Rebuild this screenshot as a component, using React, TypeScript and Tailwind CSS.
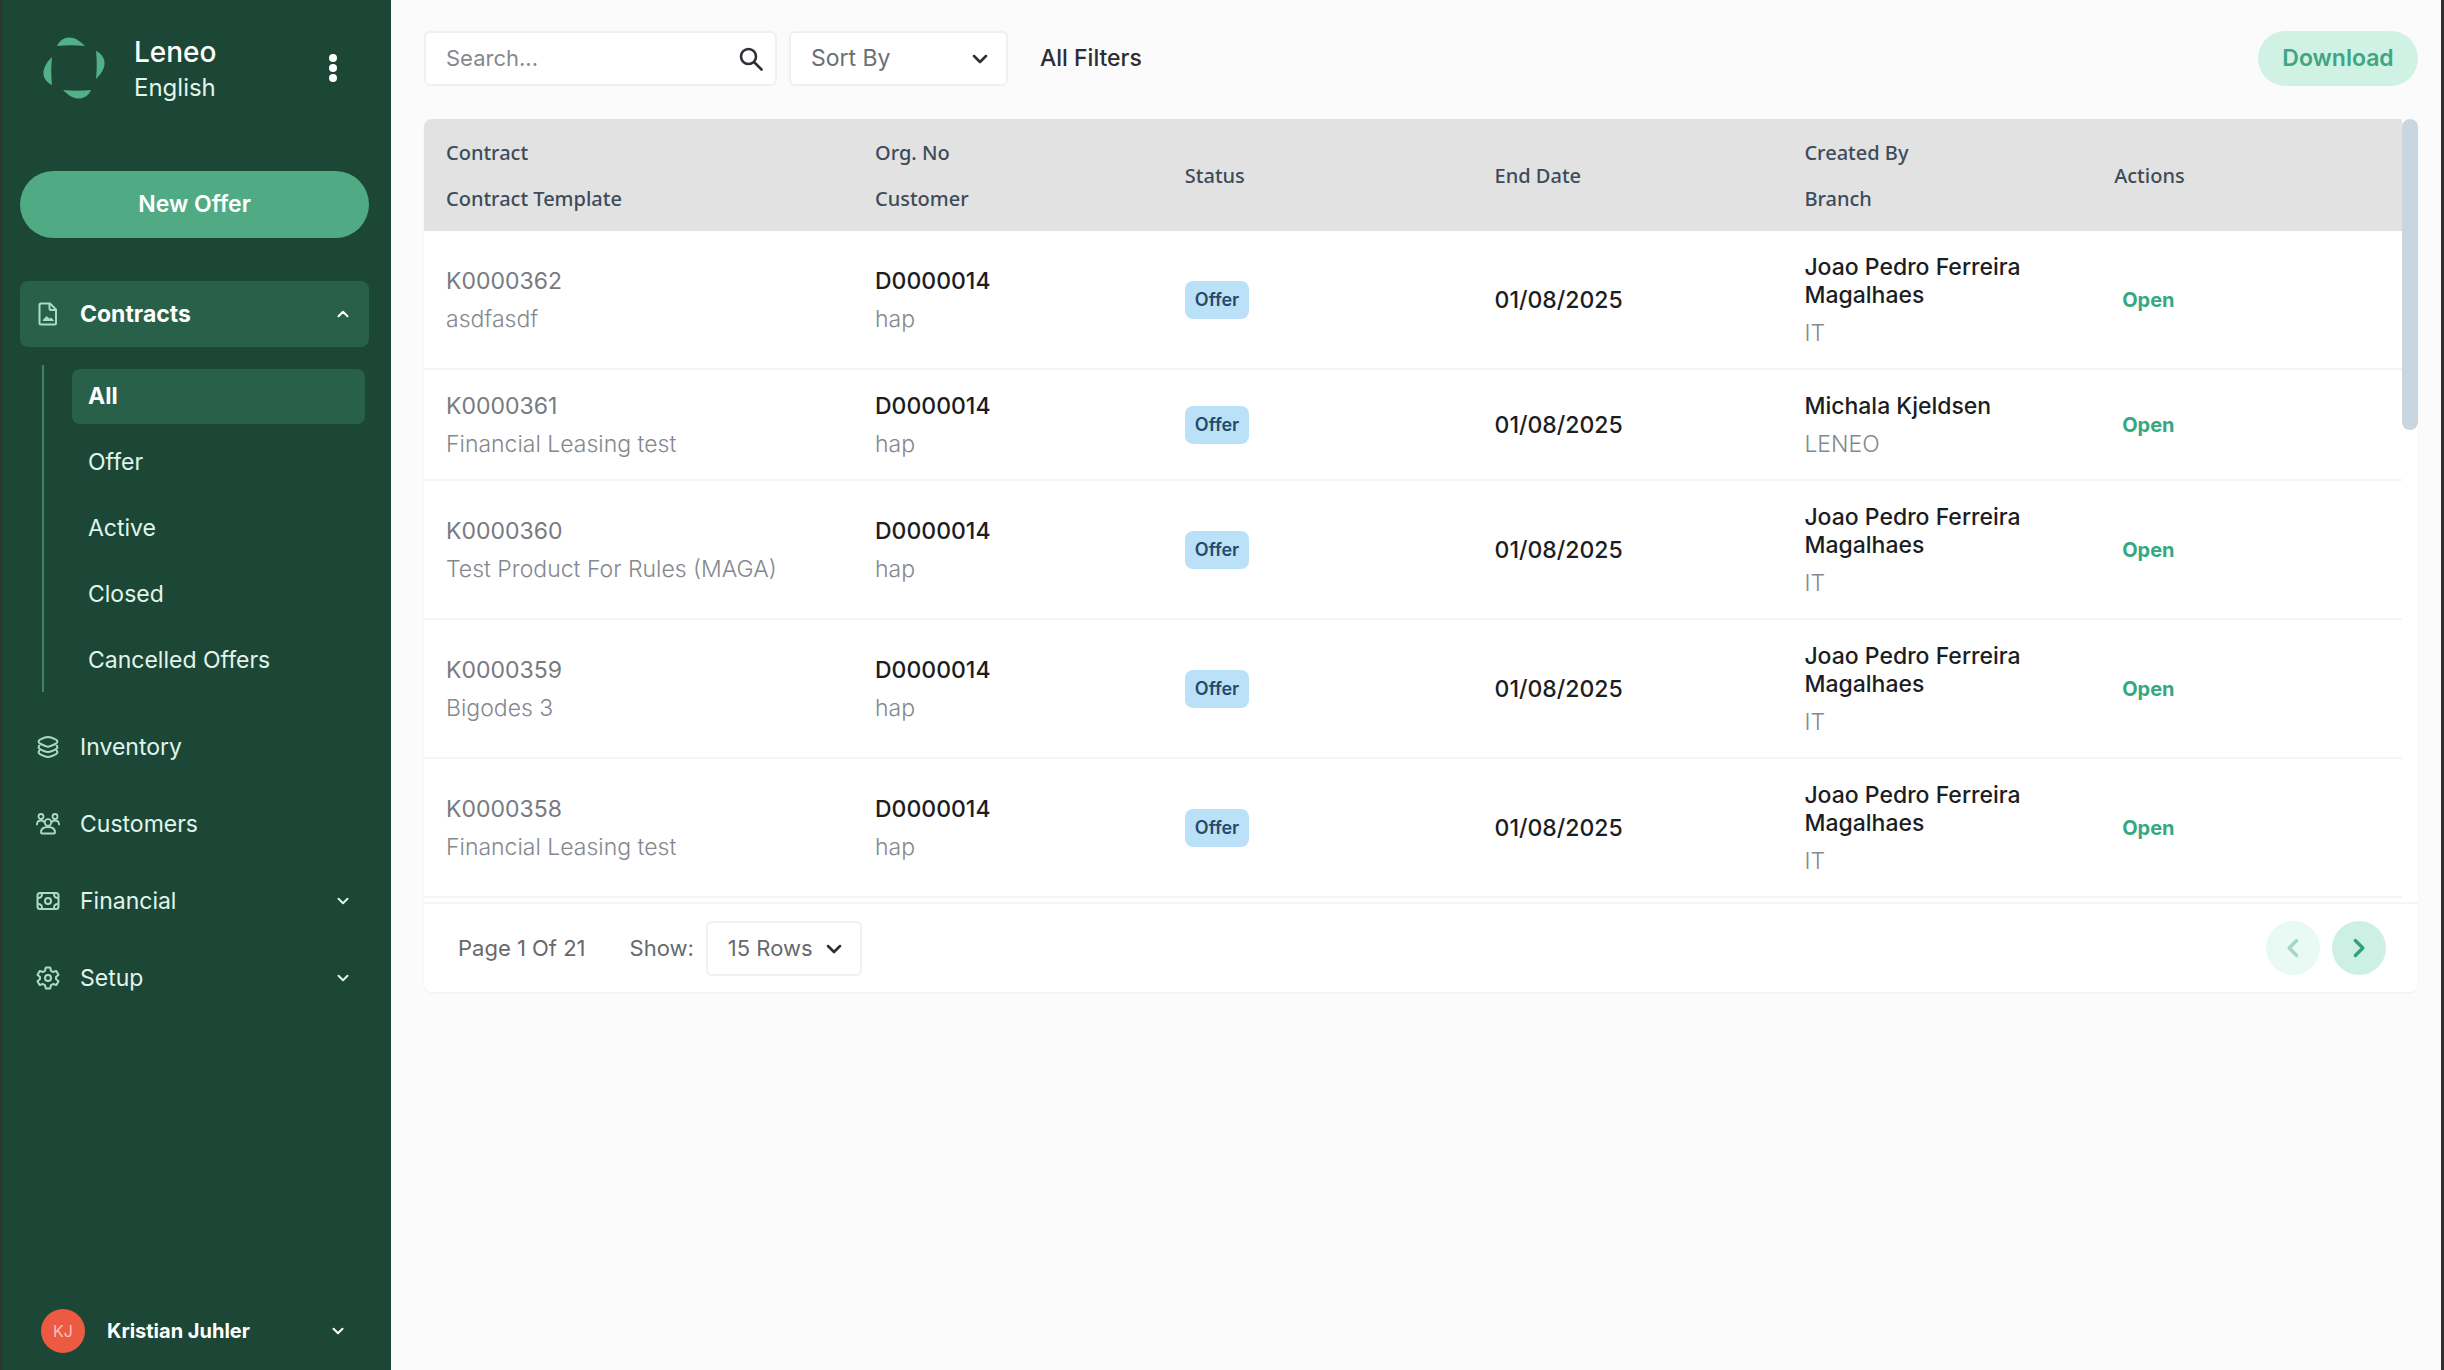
import { ReactNode } from "react";

const icon = "w-6 h-6 shrink-0 text-[#a9dcc8]";

function DocIcon() {
  return (
    <svg viewBox="0 0 24 24" className={icon} fill="none" stroke="currentColor" strokeWidth="2" strokeLinejoin="round">
      <path d="M5 1.500h9l6 6V21a1.500 1.500 0 0 1-1.500 1.500H5A1.500 1.500 0 0 1 3.500 21V3A1.500 1.500 0 0 1 5 1.500Z" />
      <path d="M13.500 2v4.500A1.500 1.500 0 0 0 15 8h5" />
      <path d="M7 18.500l3.500-4 3 2.500 1.500-1 2.500 2.500Z" fill="currentColor" strokeWidth="1" />
    </svg>
  );
}

function LayersIcon() {
  return (
    <svg viewBox="0 0 24 24" className={icon} fill="none" stroke="currentColor" strokeWidth="2" strokeLinejoin="round" strokeLinecap="round">
      <path d="M2.500 6.500c0-1 1-1.600 2.500-2.300C8 2.700 10 2 12 2s4 .7 7 2.200c1.500.7 2.500 1.300 2.500 2.300s-1 1.800-2.500 2.600c-3 1.600-5 2.700-7 2.700s-4-1.100-7-2.700c-1.500-.8-2.500-1.600-2.500-2.600Z" />
      <path d="M3.500 10.500c-1.300 1.300-1.300 2.500.5 3.600 3 1.700 5.700 2.900 8 2.900s5-1.200 8-2.900c1.800-1.100 1.800-2.300.5-3.600" />
      <path d="M3.500 15.500c-1.300 1.300-1.300 2.500.5 3.600C7 20.800 9.700 22 12 22s5-1.200 8-2.900c1.800-1.100 1.800-2.300.5-3.600" />
    </svg>
  );
}

function PeopleIcon() {
  return (
    <svg viewBox="0 0 24 24" className={icon} fill="none" stroke="currentColor" strokeWidth="1.800" strokeLinejoin="round" strokeLinecap="round">
      <circle cx="5" cy="4.500" r="2.500" />
      <circle cx="19" cy="4.500" r="2.500" />
      <circle cx="12" cy="10.500" r="3.300" />
      <path d="M5 20.500c0-3.500 2.700-5.500 7-5.500s7 2 7 5.500c0 .7-.5 1-1 1H6c-.5 0-1-.3-1-1Z" />
      <path d="M1 12.500C1 10 2.500 8.500 5 8.500c1.300 0 2.300.500 3 1.300M23 12.500c0-2.500-1.500-4-4-4-1.300 0-2.300.500-3 1.300" />
    </svg>
  );
}

function MoneyIcon() {
  return (
    <svg viewBox="0 0 24 24" className={icon} fill="none" stroke="currentColor" strokeWidth="2">
      <rect x="1.500" y="4" width="21" height="16" rx="2.500" />
      <circle cx="12" cy="12" r="3" />
      <path d="M2 9c2.500 0 4-1.500 4-4M22 9c-2.500 0-4-1.500-4-4M2 15c2.500 0 4 1.500 4 4M22 15c-2.500 0-4 1.500-4 4" />
    </svg>
  );
}

function GearIcon() {
  return (
    <svg viewBox="0 0 24 24" className={icon} fill="none" stroke="currentColor" strokeWidth="2" strokeLinejoin="round">
      <path d="M9.800 1.500h4.400l.8 3.300 2 1.200 3.300-1 2.200 3.800L20 11v2l2.500 2.200-2.200 3.800-3.300-1-2 1.200-.8 3.300H9.800L9 19.200 7 18l-3.300 1-2.200-3.800L4 13v-2L1.500 8.800 3.700 5 7 6l2-1.200Z" />
      <circle cx="12" cy="12" r="3" />
    </svg>
  );
}

function Chevron({ className = "w-3 h-3" }: { className?: string }) {
  return (
    <svg viewBox="0 0 12 12" className={`shrink-0 ${className}`} fill="none" stroke="currentColor" strokeWidth="2" strokeLinecap="round" strokeLinejoin="round">
      <path d="M1.500 3.800 6 8.300l4.500-4.500" />
    </svg>
  );
}

function Logo() {
  return (
    <svg viewBox="0 0 64 64" className="w-16 h-16 shrink-0" fill="#52b088">
      <path d="M15 10C18 3 25 0 31 2c4 1 8 4 12 8-9-1-19-1-28 0Z" />
      <path d="M54 15c7 3 10 10 8 16-1 4-4 8-8 12 1-9 1-19 0-28Z" />
      <path d="M49 54c-3 7-10 10-16 8-4-1-8-4-12-8 9 1 19 1 28 0Z" />
      <path d="M10 49C3 46 0 39 2 33c1-4 4-8 8-12-1 9-1 19 0 28Z" />
    </svg>
  );
}

const contractLinks = ["All", "Offer", "Active", "Closed", "Cancelled Offers"];

const menu: { label: string; icon: ReactNode; open?: boolean }[] = [
  { label: "Inventory", icon: <LayersIcon /> },
  { label: "Customers", icon: <PeopleIcon /> },
  { label: "Financial", icon: <MoneyIcon />, open: false },
  { label: "Setup", icon: <GearIcon />, open: false },
];

const columns = [
  ["Contract", "Contract Template"],
  ["Org. No", "Customer"],
  ["Status"],
  ["End Date"],
  ["Created By", "Branch"],
  ["Actions"],
];

const rows = [
  { id: "K0000362", template: "asdfasdf", by: "Joao Pedro Ferreira Magalhaes", branch: "IT" },
  { id: "K0000361", template: "Financial Leasing test", by: "Michala Kjeldsen", branch: "LENEO" },
  { id: "K0000360", template: "Test Product For Rules (MAGA)", by: "Joao Pedro Ferreira Magalhaes", branch: "IT" },
  { id: "K0000359", template: "Bigodes 3", by: "Joao Pedro Ferreira Magalhaes", branch: "IT" },
  { id: "K0000358", template: "Financial Leasing test", by: "Joao Pedro Ferreira Magalhaes", branch: "IT" },
];

function Sidebar() {
  return (
    <aside className="w-[391px] shrink-0 flex flex-col bg-[#1c4736] border-l-2 border-l-[#333333] text-[#e0f5ec]">
      <div className="flex items-center pl-10 pr-[50px] pt-8">
        <Logo />
        <div className="flex-1 pl-7">
          <p className="text-[28px] leading-10 font-medium text-white">Leneo</p>
          <p className="text-2xl leading-8">English</p>
        </div>
        <button aria-label="More" className="text-white">
          <svg viewBox="0 0 16 28" className="w-4 h-7" fill="currentColor">
            <circle cx="8" cy="4" r="4" />
            <circle cx="8" cy="14" r="4" />
            <circle cx="8" cy="24" r="4" />
          </svg>
        </button>
      </div>

      <div className="pl-[18px] pr-[22px] pt-[67px]">
        <button className="w-full h-[67px] rounded-full bg-[#50ab85] text-white font-semibold">
          New Offer
        </button>
      </div>

      <nav className="pl-[18px] pr-[22px] pt-[43px]">
        <button className="w-full h-[66px] flex items-center rounded-lg bg-[#296049] pl-4 pr-5 text-white font-bold">
          <DocIcon />
          <span className="flex-1 text-left pl-5">Contracts</span>
          <Chevron className="w-3 h-3 rotate-180" />
        </button>

        <ul className="ml-[22px] mt-[18px] mb-[22px] pl-7 pr-1 py-1 border-l-2 border-[#41816a] flex flex-col gap-[11px]">
          {contractLinks.map((label, index) => (
            <li key={label}>
              <a
                href="#"
                className={`flex items-center h-[55px] rounded-lg px-4 ${index === 0 ? "bg-[#296049] text-white font-bold" : ""}`}
              >
                {label}
              </a>
            </li>
          ))}
        </ul>

        <div className="flex flex-col gap-[11px]">
          {menu.map((item) => (
            <button key={item.label} className="w-full h-[66px] flex items-center pl-4 pr-5">
              {item.icon}
              <span className="flex-1 text-left pl-5">{item.label}</span>
              {item.open !== undefined && <Chevron />}
            </button>
          ))}
        </div>
      </nav>

      <button className="mt-auto mb-[17px] ml-[39px] mr-[47px] flex items-center text-white">
        <span className="w-11 h-11 rounded-full bg-[#ec5a41] text-base text-[#f9c4ba] flex items-center justify-center">
          KJ
        </span>
        <span className="flex-1 text-left pl-[22px] text-xl font-bold">Kristian Juhler</span>
        <Chevron />
      </button>
    </aside>
  );
}

function Toolbar() {
  return (
    <div className="flex items-center gap-3">
      <label className="w-[353px] h-[55px] flex items-center rounded-md border-2 border-[#edf0f5] bg-white pl-5 pr-3">
        <input
          type="text"
          aria-label="Search"
          placeholder="Search..."
          className="flex-1 min-w-0 outline-none text-[22px] placeholder:text-[#85898f]"
        />
        <svg viewBox="0 0 24 24" className="w-6 h-6 text-[#2d3136]" fill="none" stroke="currentColor" strokeWidth="2.600" strokeLinecap="round">
          <circle cx="9.500" cy="9.500" r="7.500" />
          <path d="m15.500 15.500 7 7" />
        </svg>
      </label>
      <div className="relative w-[219px] h-[55px]">
        <select aria-label="Sort By" className="w-full h-full appearance-none rounded-md border-2 border-[#edf0f5] bg-white pl-5 text-[#6c6f73]">
          <option>Sort By</option>
        </select>
        <Chevron className="w-4 h-4 absolute right-5 top-5 text-[#2d3136] pointer-events-none" />
      </div>
      <button className="pl-5 font-medium text-[#2b2e32]">All Filters</button>
      <button className="ml-auto w-40 h-[55px] rounded-full bg-[#cff2e5] text-[#41a581] font-semibold">
        Download
      </button>
    </div>
  );
}

function ContractTable() {
  return (
    <div className="flex">
      <table className="flex-1 w-full table-fixed text-left border-collapse">
        <colgroup>
          <col className="w-[429px]" />
          <col />
          <col />
          <col />
          <col />
          <col />
        </colgroup>
        <thead>
          <tr className="h-28 bg-[#e2e2e2] font-['Noto_Sans',sans-serif] text-xl leading-[46px] text-[#3d4c58]">
            {columns.map((lines) => (
              <th key={lines[0]} className="px-[22px] pt-[2px] pb-0 font-medium first:rounded-tl-lg">
                {lines.map((line) => (
                  <div key={line} className="leading-[46px]">{line}</div>
                ))}
              </th>
            ))}
          </tr>
        </thead>
        <tbody>
          {rows.map((row) => (
            <tr key={row.id} className="border-b-2 border-[#f5f5f5] leading-7">
              <td className="px-[22px]">
                <p className="text-[#777a80]">{row.id}</p>
                <p className="mt-[10px] font-light text-[#85888e]">{row.template}</p>
              </td>
              <td className="px-[22px]">
                <p className="font-medium text-[#1c1d1f]">D0000014</p>
                <p className="mt-[10px] font-light text-[#85888e]">hap</p>
              </td>
              <td className="px-[22px]">
                <span className="inline-flex items-center h-[38px] px-[10px] rounded-lg bg-[#bae1f7] text-lg font-semibold text-[#234b6b]">
                  Offer
                </span>
              </td>
              <td className="px-[22px] font-medium text-[#1c1d1f]">01/08/2025</td>
              <td className="px-[22px] pt-[22px] pb-[21px]">
                <p className="font-medium text-[#1c1d1f]">{row.by}</p>
                <p className="mt-[10px] font-light text-[#85888e]">{row.branch}</p>
              </td>
              <td className="px-[30px]">
                <a href="#" className="text-xl font-bold text-[#34a880]">Open</a>
              </td>
            </tr>
          ))}
        </tbody>
      </table>
      <div className="w-4 shrink-0">
        <div className="h-[311px] rounded-full bg-[#c9d5df]" />
      </div>
    </div>
  );
}

function Pagination() {
  return (
    <div className="mt-1 h-[90px] flex items-center border-t-2 border-[#f5f5f5] pl-[34px] pr-8 text-[22px] text-[#66696e]">
      <span>Page 1 Of 21</span>
      <label htmlFor="page-size" className="pl-11 pr-3">Show:</label>
      <div className="relative w-[156px] h-[55px]">
        <select id="page-size" className="w-full h-full appearance-none rounded-md border-2 border-[#edf0f5] bg-white pl-5">
          <option>15 Rows</option>
        </select>
        <Chevron className="w-4 h-4 absolute right-5 top-5 text-[#2d3136] pointer-events-none" />
      </div>
      <div className="ml-auto flex gap-3">
        <button aria-label="Previous page" className="w-[54px] h-[54px] rounded-full bg-[#e9f9f4] text-[#a3d6c4] flex items-center justify-center">
          <Chevron className="w-5 h-5 rotate-90" />
        </button>
        <button aria-label="Next page" className="w-[54px] h-[54px] rounded-full bg-[#cdf0e4] text-[#34a07a] flex items-center justify-center">
          <Chevron className="w-5 h-5 -rotate-90" />
        </button>
      </div>
    </div>
  );
}

function App() {
  return (
    <div className="flex min-h-screen bg-[#fbfbfb] border-r-3 border-[#303030] font-['Inter',sans-serif] text-[23px]">
      <Sidebar />
      <main className="flex-1 min-w-0 pl-[33px] pr-[23px] pt-[31px]">
        <Toolbar />
        <section className="mt-[33px] rounded-lg bg-white shadow-xs">
          <ContractTable />
          <Pagination />
        </section>
      </main>
    </div>
  );
}

export default App;
